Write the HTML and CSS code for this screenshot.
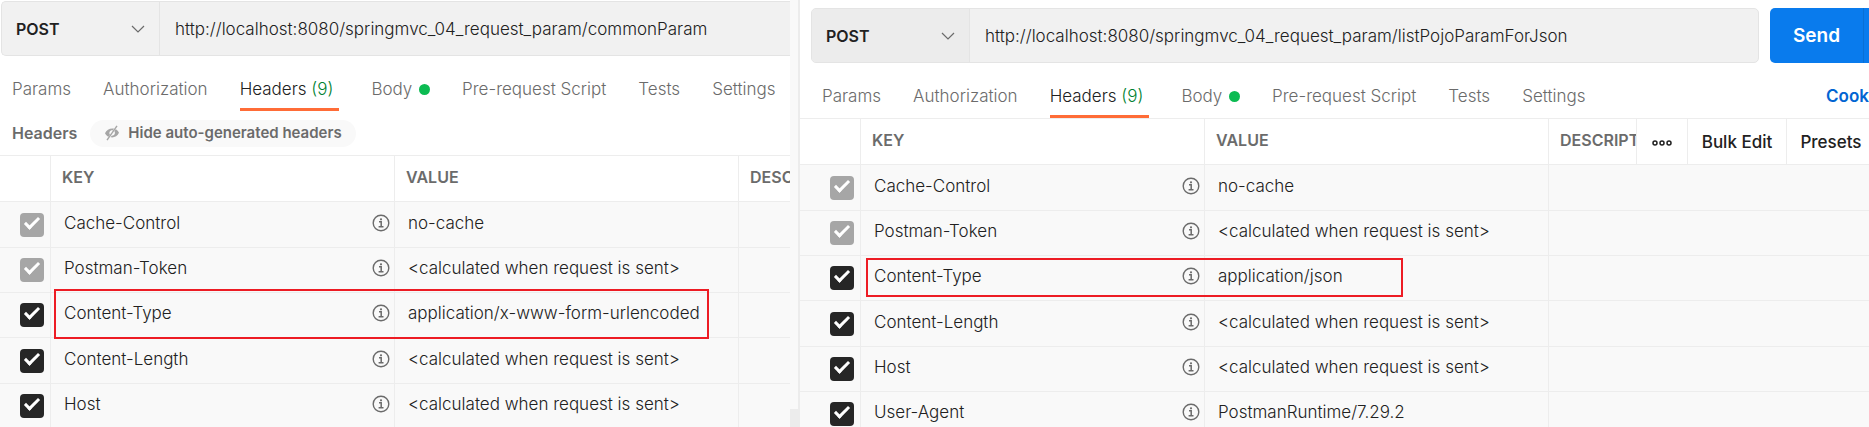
FILE: index.html
```html
<!DOCTYPE html>
<html lang="en">
<head>
  <meta charset="UTF-8">
  <title>Request Headers</title>
  <link rel="stylesheet" href="styles.css">
</head>
<body>

  <svg class="sprite">
    <symbol id="info" viewBox="0 0 18 18">
      <circle cx="9" cy="9" r="7.800" fill="none" stroke="currentColor" stroke-width="1.400"/>
      <path d="M7 7.800h2.200v4.700M6.600 12.700h4.900" fill="none" stroke="currentColor" stroke-width="1.500"/>
      <circle cx="9" cy="5.300" r="1.100" fill="currentColor"/>
    </symbol>
    <symbol id="chevron" viewBox="0 0 14 8">
      <path d="M1 1l6 6 6-6" fill="none" stroke="currentColor" stroke-width="1.200"/>
    </symbol>
  </svg>

  <div class="compare">
    <section class="panel left">
      <div class="url-bar">
        <div class="url-group">
          <div class="method">
            <select aria-label="Method"><option>POST</option></select>
            <svg><use href="#chevron"/></svg>
          </div>
          <input class="url" type="text" aria-label="Request URL" value="http://localhost:8080/springmvc_04_request_param/commonParam">
        </div>
      </div>
      <nav class="tabs">
        <a href="#">Params</a>
        <a href="#">Authorization</a>
        <a href="#" class="active">Headers <span class="count">(9)</span></a>
        <a href="#">Body <span class="dot"></span></a>
        <a href="#">Pre-request Script</a>
        <a href="#">Tests</a>
        <a href="#">Settings</a>
      </nav>
      <div class="sub-bar">
        <h2>Headers</h2>
        <button class="pill">
          <svg viewBox="0 0 16 16">
            <path d="M1 8.200C2.500 4.800 6 3 10 3.600L8.800 5.400C5.800 5 4.600 8 6 9.800L4.600 11.800C3 11 1.600 9.800 1 8.200zM15 7.800C13.500 11.200 10 13 6.600 12.300L7.700 10.700C10.600 10.800 11.800 8 10.300 6L11.600 4.300C13.200 5 14.400 6.200 15 7.800z" fill="currentColor"/>
            <path d="M13 .8L3 15.200" stroke="currentColor" stroke-width="1.400"/>
          </svg>
          Hide auto-generated headers
        </button>
      </div>
      <table>
        <colgroup><col class="col-check"><col class="col-data"><col class="col-data"><col></colgroup>
        <thead>
          <tr><th></th><th>KEY</th><th>VALUE</th><th>DESCRIPTION</th></tr>
        </thead>
        <tbody>
          <tr>
            <td><input type="checkbox" aria-label="Cache-Control" checked disabled></td>
            <td><div class="key">Cache-Control <svg><use href="#info"/></svg></div></td>
            <td>no-cache</td><td></td>
          </tr>
          <tr>
            <td><input type="checkbox" aria-label="Postman-Token" checked disabled></td>
            <td><div class="key">Postman-Token <svg><use href="#info"/></svg></div></td>
            <td>&lt;calculated when request is sent&gt;</td><td></td>
          </tr>
          <tr>
            <td><input type="checkbox" aria-label="Content-Type" checked></td>
            <td><div class="key">Content-Type <svg><use href="#info"/></svg></div><div class="marker"></div></td>
            <td>application/x-www-form-urlencoded</td><td></td>
          </tr>
          <tr>
            <td><input type="checkbox" aria-label="Content-Length" checked></td>
            <td><div class="key">Content-Length <svg><use href="#info"/></svg></div></td>
            <td>&lt;calculated when request is sent&gt;</td><td></td>
          </tr>
          <tr>
            <td><input type="checkbox" aria-label="Host" checked></td>
            <td><div class="key">Host <svg><use href="#info"/></svg></div></td>
            <td>&lt;calculated when request is sent&gt;</td><td></td>
          </tr>
        </tbody>
      </table>
    </section>

    <div class="gutter"><div class="thumb"></div></div>

    <section class="panel right">
      <div class="url-bar">
        <div class="url-group">
          <div class="method">
            <select aria-label="Method"><option>POST</option></select>
            <svg><use href="#chevron"/></svg>
          </div>
          <input class="url" type="text" aria-label="Request URL" value="http://localhost:8080/springmvc_04_request_param/listPojoParamForJson">
        </div>
        <button class="send">Send</button>
        <button class="send-more" aria-label="Send options"></button>
      </div>
      <nav class="tabs">
        <a href="#">Params</a>
        <a href="#">Authorization</a>
        <a href="#" class="active">Headers <span class="count">(9)</span></a>
        <a href="#">Body <span class="dot"></span></a>
        <a href="#">Pre-request Script</a>
        <a href="#">Tests</a>
        <a href="#">Settings</a>
        <a href="#" class="cookies">Cook</a>
      </nav>
      <table>
        <colgroup><col class="col-check"><col class="col-data"><col class="col-data"><col></colgroup>
        <thead>
          <tr>
            <th></th><th>KEY</th><th>VALUE</th>
            <th class="desc">
              <div class="desc-row">
                <span class="desc-label">DESCRIPTION</span>
                <button class="more" aria-label="More">
                  <svg viewBox="0 0 20 6"><g fill="none" stroke="currentColor" stroke-width="1.500"><circle cx="3" cy="3" r="2"/><circle cx="10" cy="3" r="2"/><circle cx="17" cy="3" r="2"/></g></svg>
                </button>
                <button class="bulk">Bulk Edit</button>
                <button class="presets">Presets</button>
              </div>
            </th>
          </tr>
        </thead>
        <tbody>
          <tr>
            <td><input type="checkbox" aria-label="Cache-Control" checked disabled></td>
            <td><div class="key">Cache-Control <svg><use href="#info"/></svg></div></td>
            <td>no-cache</td><td></td>
          </tr>
          <tr>
            <td><input type="checkbox" aria-label="Postman-Token" checked disabled></td>
            <td><div class="key">Postman-Token <svg><use href="#info"/></svg></div></td>
            <td>&lt;calculated when request is sent&gt;</td><td></td>
          </tr>
          <tr>
            <td><input type="checkbox" aria-label="Content-Type" checked></td>
            <td><div class="key">Content-Type <svg><use href="#info"/></svg></div><div class="marker"></div></td>
            <td>application/json</td><td></td>
          </tr>
          <tr>
            <td><input type="checkbox" aria-label="Content-Length" checked></td>
            <td><div class="key">Content-Length <svg><use href="#info"/></svg></div></td>
            <td>&lt;calculated when request is sent&gt;</td><td></td>
          </tr>
          <tr>
            <td><input type="checkbox" aria-label="Host" checked></td>
            <td><div class="key">Host <svg><use href="#info"/></svg></div></td>
            <td>&lt;calculated when request is sent&gt;</td><td></td>
          </tr>
          <tr>
            <td><input type="checkbox" aria-label="User-Agent" checked></td>
            <td><div class="key">User-Agent <svg><use href="#info"/></svg></div></td>
            <td>PostmanRuntime/7.29.2</td><td></td>
          </tr>
        </tbody>
      </table>
    </section>
  </div>

</body>
</html>
```
FILE: styles.css
```css
* {
  box-sizing: border-box;
}

body {
  margin: 0;
  background: #fff;
  color: #212121;
  font-family: Inter, "Liberation Sans", sans-serif;
  font-size: 17px;
  font-weight: 300;
  line-height: 24px;
}

button, input, select {
  font: inherit;
  color: inherit;
}

button {
  border: none;
  background: none;
  padding: 0;
  cursor: pointer;
}

a {
  color: inherit;
  text-decoration: none;
}

.sprite {
  display: none;
}

.compare {
  display: grid;
  grid-template-columns: minmax(0, 790fr) 10px minmax(0, 1069fr);
  height: 100vh;
  overflow: hidden;
}

.panel {
  overflow: hidden;
}

.left {
  padding-top: 1px;
}

.right {
  padding-top: 8px;
}

/* url bar */
.url-bar {
  display: flex;
}

.left .url-bar {
  padding-left: 1px;
}

.right .url-bar {
  padding-left: 11px;
}

.url-group {
  flex: 1;
  display: flex;
  height: 55px;
  background: #f1f1f1;
  border: 1px solid #e4e4e4;
  border-radius: 5px;
  overflow: hidden;
}

.left .url-group {
  border-right: none;
  border-radius: 5px 0 0 5px;
}

.method {
  position: relative;
  width: 158px;
  border-right: 1px solid #e4e4e4;
}

.right .method {
  background: #ececec;
}

.method select {
  appearance: none;
  width: 100%;
  height: 100%;
  padding: 0 14px;
  border: none;
  background: none;
  font-size: 16px;
  font-weight: 600;
}

.method svg {
  position: absolute;
  right: 14px;
  top: 23px;
  width: 14px;
  height: 8px;
  color: #6b6b6b;
  pointer-events: none;
}

.url {
  flex: 1;
  min-width: 0;
  padding: 0 15px;
  border: none;
  background: none;
}

.send {
  width: 93px;
  margin-left: 11px;
  background: #097bed;
  border-radius: 5px 0 0 5px;
  color: #fff;
  font-size: 19px;
  font-weight: 600;
}

.send-more {
  width: 6px;
  background: #097bed;
  border-left: 1px solid #0a6fd4;
}

/* tabs */
.tabs {
  display: flex;
  height: 55px;
  gap: 32px;
  padding-left: 12px;
  color: #6b6b6b;
  white-space: nowrap;
}

.right .tabs {
  height: 56px;
  padding-left: 22px;
  border-bottom: 1px solid #ededed;
}

.tabs a {
  padding-top: 21px;
}

.tabs .active {
  color: #212121;
  padding-right: 6px;
  border-bottom: 3px solid #ff6c37;
}

.count {
  color: #007f31;
}

.dot {
  display: inline-block;
  width: 11px;
  height: 11px;
  margin-left: 2px;
  border-radius: 50%;
  background: #0cbb52;
}

.tabs .cookies {
  margin-left: auto;
  color: #0265d2;
  font-weight: 600;
}

.sub-bar {
  display: flex;
  align-items: center;
  gap: 13px;
  height: 45px;
  padding-left: 12px;
  color: #6b6b6b;
  border-bottom: 1px solid #ededed;
}

.sub-bar h2 {
  margin: 0;
  font-size: 16px;
  font-weight: 600;
}

.pill {
  display: flex;
  align-items: center;
  gap: 8px;
  height: 27px;
  padding: 0 14px;
  border-radius: 14px;
  background: #f9f9f9;
  font-size: 15px;
  font-weight: 600;
}

.pill svg {
  width: 16px;
  height: 16px;
  color: #a6a6a6;
}

/* headers table */
table {
  width: 100%;
  table-layout: fixed;
  border-collapse: separate;
  border-spacing: 0;
}

.left .col-check {
  width: 51px;
}

.right .col-check {
  width: 61px;
}

.col-data {
  width: 344px;
}

th, td {
  height: 45px;
  padding: 0 12px 4px;
  border-right: 1px solid #ededed;
  border-bottom: 1px solid #ededed;
  text-align: left;
  white-space: nowrap;
}

th:last-child, td:last-child {
  border-right: none;
}

th {
  height: 46px;
  padding-left: 11px;
  overflow: hidden;
  color: #6b6b6b;
  font-size: 16px;
  font-weight: 600;
}

td {
  background: #f9f9f9;
}

tbody tr:nth-child(3n + 1) td {
  height: 46px;
}

td:first-child {
  padding: 0 6px 0 0;
}

td:nth-child(2) {
  position: relative;
  padding: 0 4px 4px 13px;
}

td:nth-child(3) {
  padding-left: 13px;
}

input[type="checkbox"] {
  appearance: none;
  display: block;
  width: 24px;
  height: 24px;
  margin: 0 0 0 auto;
  border-radius: 4px;
  background: #262626;
  overflow: hidden;
}

input[type="checkbox"]::before {
  content: "";
  display: block;
  box-sizing: border-box;
  width: 8px;
  height: 15px;
  margin: 1px 0 0 8px;
  border: solid #fff;
  border-width: 0 3px 3px 0;
  transform: rotate(45deg);
}

input[type="checkbox"]:disabled {
  background: #a6a6a6;
}

.key {
  display: flex;
  align-items: center;
  justify-content: space-between;
}

.key svg {
  width: 18px;
  height: 18px;
  color: #6b6b6b;
}

/* red frame drawn over the row */
.marker {
  position: absolute;
  z-index: 1;
  border: 2px solid #ed1c24;
  pointer-events: none;
}

.left .marker {
  top: -4px;
  left: 3px;
  width: 655px;
  height: 50px;
}

.right .marker {
  top: 2px;
  left: 5px;
  width: 537px;
  height: 39px;
}

.desc {
  padding: 0;
}

.desc-row {
  display: flex;
  align-items: center;
  height: 45px;
}

.desc-label {
  flex: 1;
  min-width: 0;
  padding: 0 0 4px 11px;
  overflow: hidden;
}

.desc-row button {
  flex: none;
  height: 45px;
  border-left: 1px solid #ededed;
  color: #212121;
  font-size: 17px;
  font-weight: 500;
}

.desc-row .more {
  width: 51px;
}

.more svg {
  width: 20px;
  height: 6px;
  vertical-align: middle;
}

.desc-row .bulk {
  width: 99px;
}

.desc-row .presets {
  width: 83px;
  padding-left: 6px;
}

.gutter {
  display: flex;
  align-items: flex-end;
  background: #f9f9f9;
  border-right: 2px solid #ececec;
}

.thumb {
  width: 8px;
  height: 18px;
  background: #ececec;
}
```
